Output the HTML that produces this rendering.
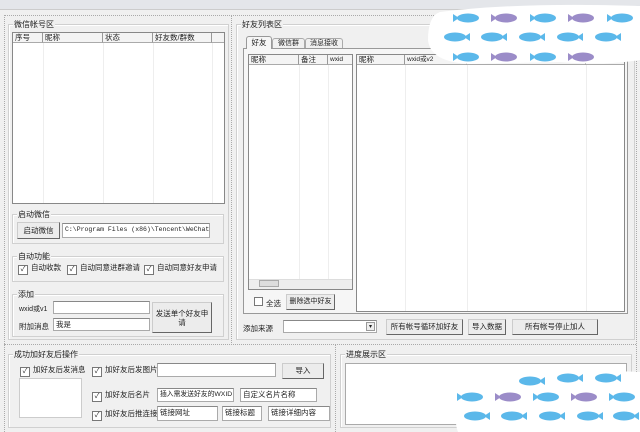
<!DOCTYPE html>
<html><head><meta charset="utf-8"><style>
*{box-sizing:border-box;margin:0;padding:0}
body{width:640px;height:432px;overflow:hidden;background:#f0f0f0;font-family:"Liberation Sans","Noto Sans CJK SC",sans-serif;font-size:7.5px;color:#222;position:relative;white-space:nowrap}
.a{position:absolute}
.grp{position:absolute;border:1px solid #d0d0d0;box-shadow:inset 1px 1px 0 #fff}
.gl{position:absolute;top:-6px;left:4px;background:#f0f0f0;padding:0 1px;font-size:8px;line-height:11px}
.lv{position:absolute;background:#fff;border:1px solid #888;overflow:hidden}
.hd{position:absolute;top:0;height:10px;border-right:1px solid #999;border-bottom:1px solid #aaa;background:#f4f4f4;font-size:7.5px;line-height:10px;padding-left:2px;overflow:hidden}
.vl{position:absolute;top:10px;bottom:0;border-left:1px solid #eee}
.tb{position:absolute;background:#fff;border:1px solid #aaa;border-top-color:#888;font-size:7.5px;line-height:12px;padding-left:2px;overflow:hidden}
.bt{position:absolute;background:#ececec;border:1px solid #ccc;border-right-color:#666;border-bottom-color:#666;font-size:7.5px;text-align:center;overflow:hidden}
.cb{position:absolute;font-size:7.5px;line-height:10px}
.cb:before{content:"✓";display:inline-block;width:8px;height:8px;border:1px solid #777;background:#fff;font-size:7px;line-height:7px;text-align:center;margin-right:3px;vertical-align:-1px}
.dot{position:absolute;border-top:1px dotted #aaa}
.dotv{position:absolute;border-left:1px dotted #aaa}
</style></head><body>
<div class="a" style="left:0;top:0;width:640px;height:10px;background:#e4e6ea;border-bottom:1px solid #ccc"></div>
<div class="dot" style="left:4px;top:15px;width:632px"></div>
<div class="dotv" style="left:4px;top:15px;height:417px"></div>
<div class="dotv" style="left:231px;top:15px;height:330px"></div>
<div class="dotv" style="left:636px;top:15px;height:417px"></div>
<div class="dot" style="left:4px;top:344px;width:632px"></div>
<div class="dotv" style="left:335px;top:344px;height:88px"></div>

<div class="grp" style="left:8px;top:24px;width:221px;height:316px"><div class="gl">微信帐号区</div></div>
<div class="lv" style="left:12px;top:32px;width:213px;height:172px">
<div class="hd" style="left:0;width:30px">序号</div>
<div class="hd" style="left:30px;width:60px">昵称</div>
<div class="hd" style="left:90px;width:50px">状态</div>
<div class="hd" style="left:140px;width:59px">好友数/群数</div>
<div class="hd" style="left:199px;width:14px;border-right:0"></div>
<div class="vl" style="left:30px"></div><div class="vl" style="left:90px"></div><div class="vl" style="left:140px"></div><div class="vl" style="left:199px"></div>
</div>
<div class="grp" style="left:12px;top:214px;width:212px;height:30px"><div class="gl">启动微信</div></div>
<div class="bt" style="left:17px;top:222px;width:43px;height:17px;line-height:15px">启动微信</div>
<div class="tb" style="left:62px;top:223px;width:148px;height:15px;font-family:'Liberation Mono',monospace;font-size:6.5px">C:\Program Files (x86)\Tencent\WeChat\</div>
<div class="grp" style="left:12px;top:256px;width:212px;height:26px"><div class="gl">自动功能</div></div>
<div class="cb" style="left:18px;top:263px">自动收款</div>
<div class="cb" style="left:67px;top:263px">自动同意进群邀请</div>
<div class="cb" style="left:144px;top:263px">自动同意好友申请</div>
<div class="grp" style="left:12px;top:294px;width:212px;height:43px"><div class="gl">添加</div></div>
<div class="a" style="left:19px;top:304px;font-size:7px">wxid或v1</div>
<div class="tb" style="left:53px;top:301px;width:97px;height:13px"></div>
<div class="a" style="left:19px;top:321px">附加消息</div>
<div class="tb" style="left:53px;top:318px;width:97px;height:13px">我是</div>
<div class="bt" style="left:152px;top:302px;width:60px;height:31px;line-height:9px;padding-top:6px">发送单个好友申<br>请</div>

<div class="grp" style="left:236px;top:24px;width:399px;height:316px"><div class="gl">好友列表区</div></div>
<div class="a" style="left:243px;top:48px;width:385px;height:266px;border:1px solid #999;background:#f6f6f6"></div>
<div class="a" style="left:246px;top:36px;width:26px;height:13px;border:1px solid #999;border-bottom:0;background:#f6f6f6;text-align:center;line-height:12px;border-radius:3px 3px 0 0">好友</div>
<div class="a" style="left:272px;top:38px;width:33px;height:10px;border:1px solid #aaa;border-bottom:0;font-size:7px;text-align:center;line-height:10px;border-radius:3px 3px 0 0">微信群</div>
<div class="a" style="left:305px;top:38px;width:38px;height:10px;border:1px solid #aaa;border-bottom:0;font-size:7px;text-align:center;line-height:10px;border-radius:3px 3px 0 0">消息接收</div>
<div class="lv" style="left:248px;top:54px;width:105px;height:236px">
<div class="hd" style="left:0;width:50px">昵称</div><div class="hd" style="left:50px;width:29px">备注</div><div class="hd" style="left:79px;width:26px;font-size:6.5px">wxid</div>
<div class="vl" style="left:50px"></div><div class="vl" style="left:79px"></div>
<div class="a" style="left:0;bottom:0;width:105px;height:10px;background:#eee;border-top:1px solid #ddd"></div>
<div class="a" style="left:10px;bottom:2px;width:20px;height:7px;background:#ddd;border:1px solid #aaa"></div>
</div>
<div class="a" style="left:254px;top:297px;width:9px;height:9px;border:1px solid #777;background:#fff"></div>
<div class="a" style="left:266px;top:298px">全选</div>
<div class="bt" style="left:286px;top:294px;width:49px;height:16px;line-height:14px;font-size:7px">删除选中好友</div>
<div class="lv" style="left:356px;top:54px;width:269px;height:258px">
<div class="hd" style="left:0;width:48px">昵称</div><div class="hd" style="left:48px;width:62px;font-size:6.5px">wxid或v2</div><div class="hd" style="left:110px;width:119px"></div><div class="hd" style="left:229px;width:40px;border-right:0"></div>
<div class="vl" style="left:48px"></div><div class="vl" style="left:110px"></div><div class="vl" style="left:229px"></div>
</div>
<div class="a" style="left:243px;top:323px">添加来源</div>
<div class="tb" style="left:283px;top:320px;width:94px;height:13px"></div>
<div class="a" style="left:366px;top:322px;width:9px;height:9px;background:#eee;border:1px solid #999;font-size:6px;text-align:center;line-height:8px">▾</div>
<div class="bt" style="left:386px;top:319px;width:77px;height:16px;line-height:14px">所有帐号循环加好友</div>
<div class="bt" style="left:468px;top:319px;width:38px;height:16px;line-height:14px">导入数据</div>
<div class="bt" style="left:512px;top:319px;width:86px;height:16px;line-height:14px">所有帐号停止加人</div>

<div class="grp" style="left:8px;top:354px;width:323px;height:74px"><div class="gl">成功加好友后操作</div></div>
<div class="cb" style="left:20px;top:365px">加好友后发消息</div>
<div class="a" style="left:19px;top:378px;width:63px;height:40px;background:#fff;border:1px solid #ccc"></div>
<div class="cb" style="left:92px;top:365px">加好友后发图片</div>
<div class="tb" style="left:157px;top:363px;width:119px;height:14px"></div>
<div class="bt" style="left:282px;top:363px;width:42px;height:16px;line-height:14px">导入</div>
<div class="cb" style="left:92px;top:390px">加好友后名片</div>
<div class="tb" style="left:157px;top:388px;width:77px;height:14px;font-size:6.8px">插入需发送好友的WXID</div>
<div class="tb" style="left:240px;top:388px;width:77px;height:14px">自定义名片名称</div>
<div class="cb" style="left:92px;top:409px">加好友后推连接</div>
<div class="tb" style="left:157px;top:406px;width:61px;height:15px">链接网址</div>
<div class="tb" style="left:222px;top:406px;width:40px;height:15px">链接标题</div>
<div class="tb" style="left:268px;top:406px;width:62px;height:15px">链接详细内容</div>

<div class="grp" style="left:340px;top:354px;width:292px;height:74px"><div class="gl">进度展示区</div></div>
<div class="a" style="left:345px;top:363px;width:282px;height:62px;background:#fff;border:1px solid #aaa"></div>

<svg class="a" style="left:0;top:0" width="640" height="432">
<defs>
<g id="fr"><ellipse cx="0" cy="0" rx="11" ry="4.5"/><path d="M-9 0 L-15 -4 L-15 4Z"/></g>
<g id="fl"><ellipse cx="0" cy="0" rx="11" ry="4.5"/><path d="M9 0 L15 -4 L15 4Z"/></g>
</defs>
<path d="M440 12 Q520 2 640 6 L640 60 Q600 66 560 62 L470 64 Q430 62 428 40 Q428 16 440 12Z" fill="#fff"/>
<g fill="#5bb8ea">
<use href="#fr" x="468" y="18"/><use href="#fr" x="545" y="18"/><use href="#fr" x="622" y="18"/>
<use href="#fl" x="455" y="37"/><use href="#fl" x="492" y="37"/><use href="#fl" x="530" y="37"/><use href="#fl" x="568" y="37"/><use href="#fl" x="606" y="37"/>
<use href="#fr" x="468" y="57"/><use href="#fr" x="545" y="57"/>
</g>
<g fill="#9b8cc8">
<use href="#fr" x="506" y="18"/><use href="#fr" x="583" y="18"/><use href="#fr" x="506" y="57"/><use href="#fr" x="583" y="57"/>
</g>
<path d="M485 380 Q560 368 640 372 L640 432 L458 432 Q448 405 485 380Z" fill="#fff"/>
<g fill="#5bb8ea">
<use href="#fl" x="530" y="381"/><use href="#fl" x="568" y="378"/><use href="#fl" x="606" y="378"/>
<use href="#fr" x="472" y="397"/><use href="#fr" x="548" y="397"/><use href="#fr" x="624" y="397"/>
<use href="#fl" x="475" y="416"/><use href="#fl" x="512" y="416"/><use href="#fl" x="550" y="416"/><use href="#fl" x="588" y="416"/><use href="#fl" x="624" y="416"/>
</g>
<g fill="#9b8cc8"><use href="#fr" x="510" y="397"/><use href="#fr" x="586" y="397"/></g>
</svg>
</body></html>
